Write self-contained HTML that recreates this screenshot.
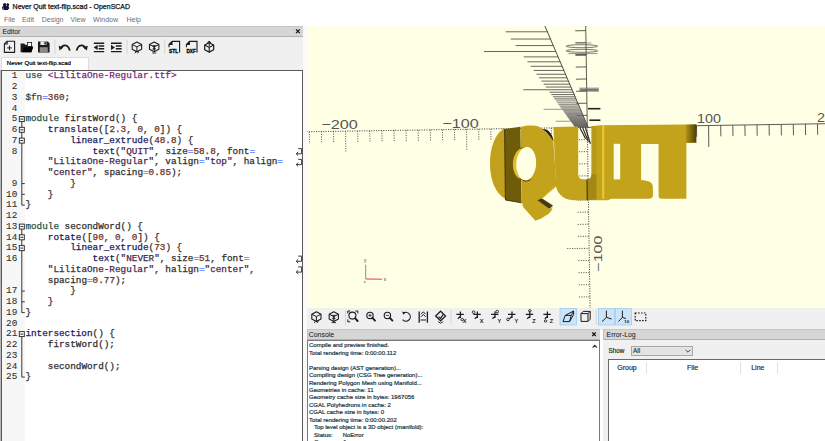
<!DOCTYPE html>
<html lang="en">
<head>
<meta charset="utf-8">
<title>Never Quit text-flip.scad - OpenSCAD</title>
<style>
html,body{margin:0;padding:0;}
body{width:825px;height:441px;overflow:hidden;background:#fff;position:relative;font-family:"Liberation Sans",sans-serif;color:#222;}
.abs{position:absolute;}
.t{position:absolute;white-space:pre;line-height:1;}
#title{left:12.6px;top:2.9px;font-size:7px;color:#111;-webkit-text-stroke:0.25px #111;}
.menu{top:16.1px;font-size:7px;color:#6e6e6e;}
#edhead{left:0;top:26px;width:304.5px;height:11px;background:#d6d6d6;border-top:1px solid #c6c6c6;border-bottom:1px solid #b2b2b2;box-sizing:border-box;}
#edtool{left:0;top:36.2px;width:304.5px;height:34px;background:#f0f0f0;}
#tab{left:1px;top:57px;width:88px;height:13px;background:#fff;border:1px solid #dcdcdc;border-bottom:none;box-sizing:border-box;}
#editor{left:1px;top:69.6px;width:301.8px;height:380px;background:#fff;border:1px solid #5a5a5a;box-sizing:border-box;}
#gutter{left:2px;top:70.6px;width:23px;height:371px;background:#f7f7f7;}
.ln{position:absolute;left:2px;width:15.3px;text-align:right;font:9.333px/10.75px "Liberation Mono",monospace;color:#333;-webkit-text-stroke:0.1px #333;}
.cl{position:absolute;white-space:pre;font:9.333px/10.75px "Liberation Mono",monospace;color:#333;-webkit-text-stroke:0.25px currentColor;}
.k{color:#2c5245;} .i{color:#7a2580;} .v{color:#35483a;} .o{color:#5f7bff;} .n{color:#6a3028;} .f{color:#20205c;} .s{color:#46284e;} .p{color:#2e2e2e;}
#split{left:302.8px;top:26px;width:4px;height:415px;background:#fafafa;}
#view{left:306.6px;top:25.8px;width:518.4px;height:281.8px;background:#ffffe5;overflow:hidden;}
#vtool{left:306.6px;top:307.6px;width:518.4px;height:22px;background:#f0f0f0;}
#conhead{left:306.6px;top:329px;width:293.6px;height:11px;background:#d6d6d6;border-top:1px solid #c6c6c6;border-bottom:1px solid #b2b2b2;border-left:1px solid #c0c0c0;box-sizing:border-box;}
#console{left:306.6px;top:340.4px;width:293.6px;height:110px;background:#fff;border:1px solid #7a7a7a;box-sizing:border-box;}
.con{position:absolute;left:309px;font-size:6px;line-height:7.45px;white-space:pre;color:#173646;-webkit-text-stroke:0.2px #173646;}
#errhead{left:602.6px;top:329px;width:222.4px;height:11px;background:#d6d6d6;border-top:1px solid #c6c6c6;border-bottom:1px solid #b2b2b2;border-left:1px solid #c0c0c0;box-sizing:border-box;}
#errbody{left:602.6px;top:340px;width:222.4px;height:102px;background:#f0f0f0;}
#combo{left:630.5px;top:346.4px;width:62.5px;height:9.6px;background:#e4e4e4;border:1px solid #a8a8a8;box-sizing:border-box;}
#table{left:608.4px;top:359.2px;width:230px;height:100px;background:#fff;border:1px solid #6a6a6a;box-sizing:border-box;}
.th{position:absolute;top:364px;font-size:7px;color:#1c1c34;-webkit-text-stroke:0.15px #1c1c34;transform:translateX(-50%);white-space:pre;line-height:1;}
.sep{position:absolute;top:361.5px;width:1px;height:12px;background:#e2e2e2;}
</style>
</head>
<body>
<!-- title bar -->
<div class="t" id="title">Never Quit text-flip.scad - OpenSCAD</div>
<!-- menu -->
<div class="t menu" style="left:3.9px">File</div>
<div class="t menu" style="left:21.9px">Edit</div>
<div class="t menu" style="left:41.7px">Design</div>
<div class="t menu" style="left:70.4px">View</div>
<div class="t menu" style="left:93.1px">Window</div>
<div class="t menu" style="left:126.5px">Help</div>

<!-- editor dock -->
<div class="abs" id="edtool"></div>
<div class="abs" id="edhead"></div>
<div class="t" style="left:2.4px;top:28.9px;font-size:6.9px;color:#111">Editor</div>
<div class="abs" id="tab"></div>
<div class="t" style="left:6.8px;top:60.2px;font-size:6px;color:#111;text-shadow:0 0 0.4px #111">Never Quit text-flip.scad</div>
<div class="abs" style="left:0;top:70px;width:1px;height:371px;background:#b8b8b8"></div>
<div class="abs" id="editor"></div>
<div class="abs" id="gutter"></div>
<div class="ln" style="top:71.30px">1</div>
<div class="cl" style="top:71.30px;left:25.40px"><span class="k">use </span><span class="i">&lt;LilitaOne-Regular.ttf&gt;</span></div>
<div class="ln" style="top:82.05px">2</div>
<div class="ln" style="top:92.80px">3</div>
<div class="cl" style="top:92.80px;left:25.40px"><span class="v">$fn</span><span class="o">=</span><span class="n">360</span><span class="p">;</span></div>
<div class="ln" style="top:103.55px">4</div>
<div class="ln" style="top:114.30px">5</div>
<div class="cl" style="top:114.30px;left:25.40px"><span class="k">module</span><span class="p"> firstWord() {</span></div>
<div class="ln" style="top:125.05px">6</div>
<div class="cl" style="top:125.05px;left:47.80px"><span class="f">translate</span><span class="p">([</span><span class="n">2.3</span><span class="p">, </span><span class="n">0</span><span class="p">, </span><span class="n">0</span><span class="p">]) {</span></div>
<div class="ln" style="top:135.80px">7</div>
<div class="cl" style="top:135.80px;left:70.20px"><span class="f">linear_extrude</span><span class="p">(</span><span class="n">48.8</span><span class="p">) {</span></div>
<div class="ln" style="top:146.55px">8</div>
<div class="cl" style="top:146.55px;left:92.60px"><span class="f">text</span><span class="p">(</span><span class="s">"QUIT"</span><span class="p">, size</span><span class="o">=</span><span class="n">58.8</span><span class="p">, font</span><span class="o">=</span></div>
<div class="cl" style="top:157.30px;left:47.80px"><span class="s">"LilitaOne-Regular"</span><span class="p">, valign</span><span class="o">=</span><span class="s">"top"</span><span class="p">, halign</span><span class="o">=</span></div>
<div class="cl" style="top:168.05px;left:47.80px"><span class="s">"center"</span><span class="p">, spacing</span><span class="o">=</span><span class="n">0.85</span><span class="p">);</span></div>
<div class="ln" style="top:178.80px">9</div>
<div class="cl" style="top:178.80px;left:70.20px"><span class="p">}</span></div>
<div class="ln" style="top:189.55px">10</div>
<div class="cl" style="top:189.55px;left:47.80px"><span class="p">}</span></div>
<div class="ln" style="top:200.30px">11</div>
<div class="cl" style="top:200.30px;left:25.40px"><span class="p">}</span></div>
<div class="ln" style="top:211.05px">12</div>
<div class="ln" style="top:221.80px">13</div>
<div class="cl" style="top:221.80px;left:25.40px"><span class="k">module</span><span class="p"> secondWord() {</span></div>
<div class="ln" style="top:232.55px">14</div>
<div class="cl" style="top:232.55px;left:47.80px"><span class="f">rotate</span><span class="p">([</span><span class="n">90</span><span class="p">, </span><span class="n">0</span><span class="p">, </span><span class="n">0</span><span class="p">]) {</span></div>
<div class="ln" style="top:243.30px">15</div>
<div class="cl" style="top:243.30px;left:70.20px"><span class="f">linear_extrude</span><span class="p">(</span><span class="n">73</span><span class="p">) {</span></div>
<div class="ln" style="top:254.05px">16</div>
<div class="cl" style="top:254.05px;left:92.60px"><span class="f">text</span><span class="p">(</span><span class="s">"NEVER"</span><span class="p">, size</span><span class="o">=</span><span class="n">51</span><span class="p">, font</span><span class="o">=</span></div>
<div class="cl" style="top:264.80px;left:47.80px"><span class="s">"LilitaOne-Regular"</span><span class="p">, halign</span><span class="o">=</span><span class="s">"center"</span><span class="p">,</span></div>
<div class="cl" style="top:275.55px;left:47.80px"><span class="p">spacing</span><span class="o">=</span><span class="n">0.77</span><span class="p">);</span></div>
<div class="ln" style="top:286.30px">17</div>
<div class="cl" style="top:286.30px;left:70.20px"><span class="p">}</span></div>
<div class="ln" style="top:297.05px">18</div>
<div class="cl" style="top:297.05px;left:47.80px"><span class="p">}</span></div>
<div class="ln" style="top:307.80px">19</div>
<div class="cl" style="top:307.80px;left:25.40px"><span class="p">}</span></div>
<div class="ln" style="top:318.55px">20</div>
<div class="ln" style="top:329.30px">21</div>
<div class="cl" style="top:329.30px;left:25.40px"><span class="f">intersection</span><span class="p">() {</span></div>
<div class="ln" style="top:340.05px">22</div>
<div class="cl" style="top:340.05px;left:47.80px"><span class="p">firstWord();</span></div>
<div class="ln" style="top:350.80px">23</div>
<div class="ln" style="top:361.55px">24</div>
<div class="cl" style="top:361.55px;left:47.80px"><span class="p">secondWord();</span></div>
<div class="ln" style="top:372.30px">25</div>
<div class="cl" style="top:372.30px;left:25.40px"><span class="p">}</span></div>
<div class="abs" id="split"></div>

<!-- 3D view -->
<div class="abs" id="view">
<svg width="518.4" height="281.8" viewBox="306.6 25.8 518.4 281.8" style="position:absolute;left:0;top:0">
<line x1="306.0" y1="131.56" x2="587.2" y2="127.20" stroke="#4a4a4a" stroke-width="1" stroke-dasharray="1.1 1.3"/>
<line x1="587.2" y1="127.20" x2="826.0" y2="123.50" stroke="#4a4a4a" stroke-width="0.9"/>
<line x1="308.9" y1="131.51" x2="309.1" y2="142.51" stroke="#4a4a4a" stroke-width="0.9" stroke-dasharray="1.1 1.3"/>
<line x1="321.0" y1="131.33" x2="321.2" y2="142.33" stroke="#4a4a4a" stroke-width="0.9" stroke-dasharray="1.1 1.3"/>
<line x1="333.1" y1="131.14" x2="333.3" y2="142.14" stroke="#4a4a4a" stroke-width="0.9" stroke-dasharray="1.1 1.3"/>
<line x1="345.2" y1="130.95" x2="345.4" y2="152.45" stroke="#4a4a4a" stroke-width="0.9" stroke-dasharray="1.1 1.3"/>
<line x1="357.3" y1="130.76" x2="357.5" y2="141.76" stroke="#4a4a4a" stroke-width="0.9" stroke-dasharray="1.1 1.3"/>
<line x1="369.4" y1="130.58" x2="369.6" y2="141.58" stroke="#4a4a4a" stroke-width="0.9" stroke-dasharray="1.1 1.3"/>
<line x1="381.5" y1="130.39" x2="381.7" y2="141.39" stroke="#4a4a4a" stroke-width="0.9" stroke-dasharray="1.1 1.3"/>
<line x1="393.6" y1="130.20" x2="393.8" y2="141.20" stroke="#4a4a4a" stroke-width="0.9" stroke-dasharray="1.1 1.3"/>
<line x1="405.7" y1="130.01" x2="405.9" y2="141.01" stroke="#4a4a4a" stroke-width="0.9" stroke-dasharray="1.1 1.3"/>
<line x1="417.8" y1="129.83" x2="418.0" y2="140.83" stroke="#4a4a4a" stroke-width="0.9" stroke-dasharray="1.1 1.3"/>
<line x1="429.9" y1="129.64" x2="430.1" y2="140.64" stroke="#4a4a4a" stroke-width="0.9" stroke-dasharray="1.1 1.3"/>
<line x1="442.0" y1="129.45" x2="442.2" y2="140.45" stroke="#4a4a4a" stroke-width="0.9" stroke-dasharray="1.1 1.3"/>
<line x1="454.1" y1="129.26" x2="454.3" y2="140.26" stroke="#4a4a4a" stroke-width="0.9" stroke-dasharray="1.1 1.3"/>
<line x1="466.2" y1="129.08" x2="466.4" y2="150.58" stroke="#4a4a4a" stroke-width="0.9" stroke-dasharray="1.1 1.3"/>
<line x1="478.3" y1="128.89" x2="478.5" y2="139.89" stroke="#4a4a4a" stroke-width="0.9" stroke-dasharray="1.1 1.3"/>
<line x1="490.4" y1="128.70" x2="490.6" y2="139.70" stroke="#4a4a4a" stroke-width="0.9" stroke-dasharray="1.1 1.3"/>
<line x1="502.5" y1="128.51" x2="502.7" y2="139.51" stroke="#4a4a4a" stroke-width="0.9" stroke-dasharray="1.1 1.3"/>
<line x1="514.6" y1="128.33" x2="514.8" y2="139.33" stroke="#4a4a4a" stroke-width="0.9" stroke-dasharray="1.1 1.3"/>
<line x1="526.7" y1="128.14" x2="526.9" y2="139.14" stroke="#4a4a4a" stroke-width="0.9" stroke-dasharray="1.1 1.3"/>
<line x1="538.8" y1="127.95" x2="539.0" y2="138.95" stroke="#4a4a4a" stroke-width="0.9" stroke-dasharray="1.1 1.3"/>
<line x1="550.9" y1="127.76" x2="551.1" y2="138.76" stroke="#4a4a4a" stroke-width="0.9" stroke-dasharray="1.1 1.3"/>
<line x1="563.0" y1="127.58" x2="563.2" y2="138.58" stroke="#4a4a4a" stroke-width="0.9" stroke-dasharray="1.1 1.3"/>
<line x1="575.1" y1="127.39" x2="575.3" y2="138.39" stroke="#4a4a4a" stroke-width="0.9" stroke-dasharray="1.1 1.3"/>
<line x1="599.3" y1="127.01" x2="599.5" y2="138.01" stroke="#4a4a4a" stroke-width="0.9"/>
<line x1="611.4" y1="126.82" x2="611.6" y2="137.82" stroke="#4a4a4a" stroke-width="0.9"/>
<line x1="623.5" y1="126.64" x2="623.7" y2="137.64" stroke="#4a4a4a" stroke-width="0.9"/>
<line x1="635.6" y1="126.45" x2="635.8" y2="137.45" stroke="#4a4a4a" stroke-width="0.9"/>
<line x1="647.7" y1="126.26" x2="647.9" y2="137.26" stroke="#4a4a4a" stroke-width="0.9"/>
<line x1="659.8" y1="126.07" x2="660.0" y2="137.07" stroke="#4a4a4a" stroke-width="0.9"/>
<line x1="671.9" y1="125.89" x2="672.1" y2="136.89" stroke="#4a4a4a" stroke-width="0.9"/>
<line x1="684.0" y1="125.70" x2="684.2" y2="136.70" stroke="#4a4a4a" stroke-width="0.9"/>
<line x1="696.1" y1="125.51" x2="696.3" y2="136.51" stroke="#4a4a4a" stroke-width="0.9"/>
<line x1="708.2" y1="125.32" x2="708.4" y2="146.82" stroke="#4a4a4a" stroke-width="0.9"/>
<line x1="720.3" y1="125.14" x2="720.5" y2="136.14" stroke="#4a4a4a" stroke-width="0.9"/>
<line x1="732.4" y1="124.95" x2="732.6" y2="135.95" stroke="#4a4a4a" stroke-width="0.9"/>
<line x1="744.5" y1="124.76" x2="744.7" y2="135.76" stroke="#4a4a4a" stroke-width="0.9"/>
<line x1="756.6" y1="124.57" x2="756.8" y2="135.57" stroke="#4a4a4a" stroke-width="0.9"/>
<line x1="768.7" y1="124.39" x2="768.9" y2="135.39" stroke="#4a4a4a" stroke-width="0.9"/>
<line x1="780.8" y1="124.20" x2="781.0" y2="135.20" stroke="#4a4a4a" stroke-width="0.9"/>
<line x1="792.9" y1="124.01" x2="793.1" y2="135.01" stroke="#4a4a4a" stroke-width="0.9"/>
<line x1="805.0" y1="123.82" x2="805.2" y2="134.82" stroke="#4a4a4a" stroke-width="0.9"/>
<line x1="817.1" y1="123.64" x2="817.3" y2="134.64" stroke="#4a4a4a" stroke-width="0.9"/>
<line x1="585.32" y1="25" x2="586.91" y2="127.2" stroke="#4a4a4a" stroke-width="0.9"/>
<line x1="586.91" y1="127.2" x2="589.71" y2="308" stroke="#4a4a4a" stroke-width="1" stroke-dasharray="1.1 1.3"/>
<line x1="576.12" y1="115.3" x2="586.72" y2="115.1" stroke="#4a4a4a" stroke-width="0.9"/>
<line x1="575.93" y1="103.2" x2="586.53" y2="103.0" stroke="#4a4a4a" stroke-width="0.9"/>
<line x1="575.74" y1="91.1" x2="586.34" y2="90.9" stroke="#4a4a4a" stroke-width="0.9"/>
<line x1="575.56" y1="79.0" x2="586.16" y2="78.8" stroke="#4a4a4a" stroke-width="0.9"/>
<line x1="575.37" y1="66.9" x2="585.97" y2="66.7" stroke="#4a4a4a" stroke-width="0.9"/>
<line x1="575.18" y1="54.8" x2="585.78" y2="54.6" stroke="#4a4a4a" stroke-width="0.9"/>
<line x1="574.99" y1="42.6" x2="585.59" y2="42.5" stroke="#4a4a4a" stroke-width="0.9"/>
<line x1="574.81" y1="30.6" x2="585.41" y2="30.4" stroke="#4a4a4a" stroke-width="0.9"/>
<line x1="576.09" y1="139.5" x2="587.09" y2="139.3" stroke="#4a4a4a" stroke-width="0.9" stroke-dasharray="1.1 1.3"/>
<line x1="576.28" y1="151.6" x2="587.28" y2="151.4" stroke="#4a4a4a" stroke-width="0.9" stroke-dasharray="1.1 1.3"/>
<line x1="576.47" y1="163.7" x2="587.47" y2="163.5" stroke="#4a4a4a" stroke-width="0.9" stroke-dasharray="1.1 1.3"/>
<line x1="576.66" y1="175.8" x2="587.66" y2="175.6" stroke="#4a4a4a" stroke-width="0.9" stroke-dasharray="1.1 1.3"/>
<line x1="576.84" y1="187.8" x2="587.84" y2="187.7" stroke="#4a4a4a" stroke-width="0.9" stroke-dasharray="1.1 1.3"/>
<line x1="577.03" y1="200.0" x2="588.03" y2="199.8" stroke="#4a4a4a" stroke-width="0.9" stroke-dasharray="1.1 1.3"/>
<line x1="577.22" y1="212.1" x2="588.22" y2="211.9" stroke="#4a4a4a" stroke-width="0.9" stroke-dasharray="1.1 1.3"/>
<line x1="577.41" y1="224.2" x2="588.41" y2="224.0" stroke="#4a4a4a" stroke-width="0.9" stroke-dasharray="1.1 1.3"/>
<line x1="577.59" y1="236.2" x2="588.59" y2="236.1" stroke="#4a4a4a" stroke-width="0.9" stroke-dasharray="1.1 1.3"/>
<line x1="566.78" y1="248.3" x2="588.78" y2="248.2" stroke="#4a4a4a" stroke-width="0.9" stroke-dasharray="1.1 1.3"/>
<line x1="577.97" y1="260.4" x2="588.97" y2="260.3" stroke="#4a4a4a" stroke-width="0.9" stroke-dasharray="1.1 1.3"/>
<line x1="578.16" y1="272.5" x2="589.16" y2="272.4" stroke="#4a4a4a" stroke-width="0.9" stroke-dasharray="1.1 1.3"/>
<line x1="578.34" y1="284.6" x2="589.34" y2="284.5" stroke="#4a4a4a" stroke-width="0.9" stroke-dasharray="1.1 1.3"/>
<line x1="578.53" y1="296.8" x2="589.53" y2="296.6" stroke="#4a4a4a" stroke-width="0.9" stroke-dasharray="1.1 1.3"/>
<line x1="578.72" y1="308.8" x2="589.72" y2="308.7" stroke="#4a4a4a" stroke-width="0.9" stroke-dasharray="1.1 1.3"/>
<line x1="543.75" y1="24" x2="587.94" y2="127.6" stroke="#3a3a3a" stroke-width="0.9"/>
<line x1="505.16" y1="31.59" x2="546.99" y2="31.59" stroke="#2c2c2c" stroke-width="0.80" opacity="0.90"/>
<line x1="510.45" y1="38.85" x2="550.08" y2="38.85" stroke="#2c2c2c" stroke-width="0.80" opacity="0.90"/>
<line x1="515.21" y1="45.39" x2="552.87" y2="45.39" stroke="#2c2c2c" stroke-width="0.80" opacity="0.90"/>
<line x1="483.65" y1="51.31" x2="555.40" y2="51.31" stroke="#2c2c2c" stroke-width="0.80" opacity="0.90"/>
<line x1="523.44" y1="56.69" x2="557.69" y2="56.69" stroke="#2c2c2c" stroke-width="0.80" opacity="0.90"/>
<line x1="527.02" y1="61.60" x2="559.79" y2="61.60" stroke="#2c2c2c" stroke-width="0.80" opacity="0.90"/>
<line x1="530.31" y1="66.10" x2="561.71" y2="66.10" stroke="#2c2c2c" stroke-width="0.80" opacity="0.90"/>
<line x1="533.33" y1="70.25" x2="563.48" y2="70.25" stroke="#2c2c2c" stroke-width="0.80" opacity="0.90"/>
<line x1="536.11" y1="74.08" x2="565.11" y2="74.08" stroke="#2c2c2c" stroke-width="0.80" opacity="0.90"/>
<line x1="538.70" y1="77.62" x2="566.62" y2="77.62" stroke="#2c2c2c" stroke-width="0.80" opacity="0.90"/>
<line x1="541.10" y1="80.91" x2="568.03" y2="80.91" stroke="#2c2c2c" stroke-width="0.80" opacity="0.90"/>
<line x1="543.33" y1="83.98" x2="569.33" y2="83.98" stroke="#2c2c2c" stroke-width="0.80" opacity="0.90"/>
<line x1="545.41" y1="86.84" x2="570.55" y2="86.84" stroke="#2c2c2c" stroke-width="0.80" opacity="0.90"/>
<line x1="523.03" y1="89.52" x2="571.70" y2="89.52" stroke="#2c2c2c" stroke-width="0.80" opacity="0.90"/>
<line x1="549.19" y1="92.03" x2="572.77" y2="92.03" stroke="#2c2c2c" stroke-width="0.80" opacity="0.90"/>
<line x1="550.91" y1="94.39" x2="573.77" y2="94.39" stroke="#2c2c2c" stroke-width="0.80" opacity="0.90"/>
<line x1="552.53" y1="96.61" x2="574.72" y2="96.61" stroke="#2c2c2c" stroke-width="0.80" opacity="0.90"/>
<line x1="554.05" y1="98.70" x2="575.61" y2="98.70" stroke="#2c2c2c" stroke-width="0.80" opacity="0.90"/>
<line x1="555.49" y1="100.68" x2="576.46" y2="100.68" stroke="#2c2c2c" stroke-width="0.80" opacity="0.60"/>
<line x1="556.86" y1="102.55" x2="577.25" y2="102.55" stroke="#2c2c2c" stroke-width="0.80" opacity="0.60"/>
<line x1="558.15" y1="104.32" x2="578.01" y2="104.32" stroke="#2c2c2c" stroke-width="0.80" opacity="0.60"/>
<line x1="559.37" y1="106.00" x2="578.73" y2="106.00" stroke="#2c2c2c" stroke-width="0.80" opacity="0.60"/>
<line x1="560.54" y1="107.60" x2="579.41" y2="107.60" stroke="#2c2c2c" stroke-width="0.80" opacity="0.60"/>
<line x1="543.23" y1="109.12" x2="580.06" y2="109.12" stroke="#2c2c2c" stroke-width="0.80" opacity="0.60"/>
<line x1="562.70" y1="110.56" x2="580.68" y2="110.56" stroke="#2c2c2c" stroke-width="0.80" opacity="0.60"/>
<line x1="563.71" y1="111.94" x2="581.26" y2="111.94" stroke="#2c2c2c" stroke-width="0.80" opacity="0.60"/>
<line x1="564.66" y1="113.26" x2="581.83" y2="113.26" stroke="#2c2c2c" stroke-width="0.80" opacity="0.60"/>
<line x1="565.58" y1="114.52" x2="582.36" y2="114.52" stroke="#2c2c2c" stroke-width="0.80" opacity="0.60"/>
<line x1="566.46" y1="115.73" x2="582.88" y2="115.73" stroke="#2c2c2c" stroke-width="0.80" opacity="0.60"/>
<line x1="567.30" y1="116.88" x2="583.37" y2="116.88" stroke="#2c2c2c" stroke-width="0.80" opacity="0.60"/>
<line x1="568.11" y1="117.98" x2="583.84" y2="117.98" stroke="#2c2c2c" stroke-width="0.80" opacity="0.60"/>
<line x1="568.88" y1="119.04" x2="584.29" y2="119.04" stroke="#2c2c2c" stroke-width="0.80" opacity="0.60"/>
<line x1="569.62" y1="120.06" x2="584.73" y2="120.06" stroke="#2c2c2c" stroke-width="0.80" opacity="0.60"/>
<line x1="555.52" y1="121.04" x2="585.14" y2="121.04" stroke="#2c2c2c" stroke-width="0.80" opacity="0.60"/>
<line x1="571.02" y1="121.98" x2="585.55" y2="121.98" stroke="#2c2c2c" stroke-width="0.80" opacity="0.60"/>
<line x1="571.68" y1="122.89" x2="585.93" y2="122.89" stroke="#2c2c2c" stroke-width="0.80" opacity="0.60"/>
<line x1="572.31" y1="123.76" x2="586.30" y2="123.76" stroke="#2c2c2c" stroke-width="0.80" opacity="0.60"/>
<line x1="572.92" y1="124.60" x2="586.66" y2="124.60" stroke="#2c2c2c" stroke-width="0.80" opacity="0.60"/>
<line x1="573.51" y1="125.41" x2="587.01" y2="125.41" stroke="#2c2c2c" stroke-width="0.80" opacity="0.60"/>
<line x1="574.08" y1="126.19" x2="587.34" y2="126.19" stroke="#2c2c2c" stroke-width="0.80" opacity="0.60"/>
<line x1="574.63" y1="126.94" x2="587.66" y2="126.94" stroke="#2c2c2c" stroke-width="0.80" opacity="0.60"/>
<defs><linearGradient id="bg" x1="0" x2="0" y1="0" y2="1"><stop offset="0" stop-color="#8a8a8a" stop-opacity="0"/><stop offset="0.5" stop-color="#808080" stop-opacity="0.55"/><stop offset="1" stop-color="#5c5c5c" stop-opacity="0.9"/></linearGradient></defs>
<path d="M552.1 96 L574.5 96 L587.9 127.4 L575.0 127.4Z" fill="url(#bg)"/>
<ellipse cx="581.5" cy="46" rx="15.8" ry="1.5" fill="none" stroke="#555" stroke-width="0.8"/>
<ellipse cx="581.5" cy="50.6" rx="15.8" ry="1.5" fill="none" stroke="#555" stroke-width="0.8"/>
<line x1="575" y1="42.8" x2="591" y2="42.8" stroke="#777" stroke-width="0.7"/>
<line x1="568" y1="53.4" x2="597" y2="53.4" stroke="#777" stroke-width="0.8"/>
<line x1="575" y1="54.7" x2="586" y2="54.7" stroke="#222" stroke-width="0.9"/>
<rect x="579" y="87.4" width="19.5" height="4.2" fill="#777" opacity="0.7"/>
<line x1="580" y1="89.8" x2="598" y2="89.8" stroke="#444" stroke-width="1" opacity="0.8"/>
<line x1="587.6" y1="108.5" x2="600" y2="108.5" stroke="#222" stroke-width="1.6"/>
<line x1="589" y1="120" x2="600" y2="120" stroke="#222" stroke-width="1.6"/>
<text x="321" y="129.2" font-size="12.8" textLength="36.5" lengthAdjust="spacingAndGlyphs" font-family="Liberation Sans, sans-serif" fill="#555">−200</text>
<text x="442" y="127.4" font-size="12.8" textLength="36.5" lengthAdjust="spacingAndGlyphs" font-family="Liberation Sans, sans-serif" fill="#555">−100</text>
<text x="696.7" y="123.2" font-size="12.6" textLength="24" lengthAdjust="spacingAndGlyphs" font-family="Liberation Sans, sans-serif" fill="#555">100</text>
<text x="816.6" y="121.8" font-size="12.6" textLength="24" lengthAdjust="spacingAndGlyphs" font-family="Liberation Sans, sans-serif" fill="#555">200</text>
<text transform="translate(601.2 271.5) rotate(-90)" font-size="11.4" textLength="36" lengthAdjust="spacingAndGlyphs" font-family="Liberation Sans, sans-serif" fill="#555">−100</text>
<path d="M505 128.3 C496.5 130.5 489.6 145 489.6 163 C489.6 181 496 194.5 505.4 198.6 L505.4 128.3Z" fill="#c1a01d"/>
<path d="M504.2 128.8 L520 126.6 L521.2 202.6 L505 199.8Z" fill="#6f5c0a"/>
<path d="M504.2 128.8 L505 199.8" stroke="#3b3004" stroke-width="0.9" fill="none"/>
<path d="M505 199.8 L521.2 202.6" stroke="#3b3004" stroke-width="0.9" fill="none"/>
<path d="M520.2 126.8 C524 125.2 530 124.8 535 125.6 C537 126 538.5 126.4 539.5 127 Q547.8 132.4 553 141 L556 186.2 L542.2 197.7 L536.8 200 L549 208.8 L552.2 207.2 C551.5 211 548.5 213.6 545.4 215.4 C542 217.8 538.5 219.6 535 220.6 L522.7 206.8 L521.3 201.3Z" fill="#c4a31c"/>
<path d="M536.8 200 L541.3 198 L552.6 205.4 L549 208.8Z" fill="#4a3c08"/>
<path d="M555.3 186 L542.2 197.7" stroke="#e6c63a" stroke-width="1" fill="none"/>
<path d="M549 208.8 L552.4 207" stroke="#e6c63a" stroke-width="1" fill="none"/>
<path d="M553 126.8 L577.8 126.2 L577.8 174 Q577.8 179 582.6 179 L586.4 179 Q591.2 179 591.2 174 L591.2 126 L600 125 L686 124.3 L686 198.6 L661.4 198.6 Q658.2 198.6 658.2 195.6 L658.2 143.7 L640.7 143.7 L640.7 179.8 C646 180.4 652.2 180.8 652.4 186.4 L652.6 194.6 Q652.6 198.6 648.6 198.6 L612 198.6 Q610 198.6 608 200 L573 200 C563 199.5 557.5 194 555.5 186 Z" fill="#c4a31c"/>
<path d="M542 128.8 Q548.4 133.4 553.2 141.4 C553 137.6 551.4 134 548.6 131.2 C546.6 129.4 544.4 128.6 542 128.8Z" fill="#241d02"/>
<path d="M591.2 126 L596 125.6 L596 199 L591.2 199.6Z" fill="#b7991a"/>
<path d="M586.4 179.2 Q591.2 179 591.2 174 L596 174 L596 199 L586.4 200Z" fill="#a38815"/>
<path d="M586.6 179.4 L586.9 200" stroke="#3b3004" stroke-width="1" fill="none"/>
<path d="M601.6 125 L604 124.9 L604 198.6 L601.6 198.6Z" fill="#e6c62e"/>
<rect x="613.3" y="143.6" width="6.5" height="35.6" fill="#ffffe5"/>
<defs><linearGradient id="tg" x1="0" x2="1" y1="0" y2="0"><stop offset="0" stop-color="#b39418"/><stop offset="0.55" stop-color="#7a650c"/><stop offset="1" stop-color="#4d3f06"/></linearGradient></defs>
<path d="M685.4 124.3 L696 124 L696 142.6 L685.4 142.8Z" fill="url(#tg)"/>
<ellipse cx="522" cy="163.4" rx="10.1" ry="15.9" fill="#dfbd2a" stroke="#4e4006" stroke-width="0.7" transform="rotate(3 522 163.4)"/>
<path d="M519 177 C522 182 528 183 532.4 177.6 C528 181.6 523 181 519 177Z" fill="#3b3004"/>
<ellipse cx="525.8" cy="163.5" rx="9.9" ry="16.7" fill="#ffffe5" transform="rotate(4 525.8 163.5)"/>
<line x1="579.4" y1="127.2" x2="585.2" y2="138.6" stroke="#2a2a2a" stroke-width="1.2"/>
<line x1="582.2" y1="127.2" x2="588.0" y2="141.6" stroke="#2a2a2a" stroke-width="1.2"/>
<line x1="585.0" y1="127.2" x2="590.0" y2="143.6" stroke="#2a2a2a" stroke-width="1.2"/>
<line x1="365.3" y1="278.8" x2="365.3" y2="264.5" stroke="#3fbf5f" stroke-width="1"/>
<line x1="365.3" y1="278.8" x2="381.6" y2="279" stroke="#e04040" stroke-width="1"/>
<text x="363.6" y="261.6" font-size="4.6" font-family="Liberation Sans, sans-serif" fill="#333">y</text>
<text x="383.4" y="280.4" font-size="4.6" font-family="Liberation Sans, sans-serif" fill="#333">x</text>
<text x="363.4" y="282.6" font-size="4" font-family="Liberation Sans, sans-serif" fill="#333">z</text>
</svg>
</div>
<div class="abs" id="vtool"></div>

<!-- console -->
<div class="abs" id="conhead"></div>
<div class="t" style="left:308.8px;top:332px;font-size:6.9px;color:#111">Console</div>
<div class="abs" id="console"></div>
<div class="con" style="top:342.3px">Compile and preview finished.
Total rendering time: 0:00:00.112

Parsing design (AST generation)...
Compiling design (CSG Tree generation)...
Rendering Polygon Mesh using Manifold...
Geometries in cache: 11
Geometry cache size in bytes: 1967056
CGAL Polyhedrons in cache: 2
CGAL cache size in bytes: 0
Total rendering time: 0:00:00.202
   Top level object is a 3D object (manifold):
   Status:      NoError
   Genus:      1</div>

<!-- error log -->
<div class="abs" id="errbody"></div>
<div class="abs" id="errhead"></div>
<div class="t" style="left:606.6px;top:332px;font-size:6.9px;color:#111">Error-Log</div>
<div class="t" style="left:608.5px;top:348px;font-size:6.4px;color:#1a1a1a;-webkit-text-stroke:0.15px #1a1a1a">Show</div>
<div class="abs" id="combo"></div>
<div class="t" style="left:633px;top:348px;font-size:6.4px;color:#173646;-webkit-text-stroke:0.15px #173646">All</div>
<div class="abs" id="table"></div>
<div class="th" style="left:627px">Group</div>
<div class="th" style="left:692.6px">File</div>
<div class="th" style="left:757.8px">Line</div>
<div class="sep" style="left:645.5px"></div>
<div class="sep" style="left:739.6px"></div>
<div class="sep" style="left:776.6px"></div>

<!-- overlay svg for icons, fold markers etc -->
<svg class="abs" style="left:0;top:0" width="825" height="441" viewBox="0 0 825 441">
<line x1="21.8" y1="119.1" x2="21.8" y2="205.1" stroke="#222" stroke-width="0.9"/>
<rect x="19.3" y="116.6" width="5" height="5" fill="#fdfdfd" stroke="#222" stroke-width="0.9"/>
<line x1="20.4" y1="119.1" x2="23.2" y2="119.1" stroke="#111" stroke-width="0.9"/>
<rect x="19.3" y="127.3" width="5" height="5" fill="#fdfdfd" stroke="#222" stroke-width="0.9"/>
<line x1="20.4" y1="129.8" x2="23.2" y2="129.8" stroke="#111" stroke-width="0.9"/>
<rect x="19.3" y="138.1" width="5" height="5" fill="#fdfdfd" stroke="#222" stroke-width="0.9"/>
<line x1="20.4" y1="140.6" x2="23.2" y2="140.6" stroke="#111" stroke-width="0.9"/>
<line x1="21.8" y1="183.6" x2="24.8" y2="183.6" stroke="#222" stroke-width="0.9"/>
<line x1="21.8" y1="194.3" x2="24.8" y2="194.3" stroke="#222" stroke-width="0.9"/>
<line x1="21.8" y1="205.1" x2="24.8" y2="205.1" stroke="#222" stroke-width="0.9"/>
<line x1="21.8" y1="226.6" x2="21.8" y2="312.6" stroke="#222" stroke-width="0.9"/>
<rect x="19.3" y="224.1" width="5" height="5" fill="#fdfdfd" stroke="#222" stroke-width="0.9"/>
<line x1="20.4" y1="226.6" x2="23.2" y2="226.6" stroke="#111" stroke-width="0.9"/>
<rect x="19.3" y="234.8" width="5" height="5" fill="#fdfdfd" stroke="#222" stroke-width="0.9"/>
<line x1="20.4" y1="237.3" x2="23.2" y2="237.3" stroke="#111" stroke-width="0.9"/>
<rect x="19.3" y="245.6" width="5" height="5" fill="#fdfdfd" stroke="#222" stroke-width="0.9"/>
<line x1="20.4" y1="248.1" x2="23.2" y2="248.1" stroke="#111" stroke-width="0.9"/>
<line x1="21.8" y1="291.1" x2="24.8" y2="291.1" stroke="#222" stroke-width="0.9"/>
<line x1="21.8" y1="301.8" x2="24.8" y2="301.8" stroke="#222" stroke-width="0.9"/>
<line x1="21.8" y1="312.6" x2="24.8" y2="312.6" stroke="#222" stroke-width="0.9"/>
<line x1="21.8" y1="334.1" x2="21.8" y2="377.1" stroke="#222" stroke-width="0.9"/>
<rect x="19.3" y="331.6" width="5" height="5" fill="#fdfdfd" stroke="#222" stroke-width="0.9"/>
<line x1="20.4" y1="334.1" x2="23.2" y2="334.1" stroke="#111" stroke-width="0.9"/>
<line x1="21.8" y1="377.1" x2="24.8" y2="377.1" stroke="#222" stroke-width="0.9"/>
<path d="M298.2 148.6 h3.4 v5.2 h-5.4 m2 -1.9 l-2 1.9 l2 1.9" fill="none" stroke="#3a3a3a" stroke-width="1"/>
<path d="M298.2 159.4 h3.4 v5.2 h-5.4 m2 -1.9 l-2 1.9 l2 1.9" fill="none" stroke="#3a3a3a" stroke-width="1"/>
<path d="M298.2 256.1 h3.4 v5.2 h-5.4 m2 -1.9 l-2 1.9 l2 1.9" fill="none" stroke="#3a3a3a" stroke-width="1"/>
<path d="M298.2 266.9 h3.4 v5.2 h-5.4 m2 -1.9 l-2 1.9 l2 1.9" fill="none" stroke="#3a3a3a" stroke-width="1"/>
<g fill="none" stroke="#1c1c1c" stroke-width="1.1" stroke-linejoin="round">
<path d="M7.2 41.2 H14.6 V52.4 H4.4 V44 Z"/>
<path d="M7.2 41.2 V44 H4.4"/>
<path d="M9.5 45.6 V50.2 M7.2 47.9 H11.8" stroke-width="1"/>
</g>
<path d="M20.6 52.2 V43.6 H24.2 L25.2 44.8 H27 V42 H32 V46.2 H33 L31.4 52.2 Z" fill="#1c1c1c"/>
<path d="M27.8 42.8 H31.2 V46 H27.8Z" fill="#f4f4f4"/>
<path d="M22.2 52.2 L23.8 47.2 H33.2 L31.4 52.2Z" fill="#000"/>
<path d="M38 41.4 H47.8 L49.6 43.2 V52.4 H38Z" fill="#1c1c1c"/>
<rect x="40.4" y="41.4" width="6" height="3.6" fill="#e8e8e8"/>
<rect x="44.4" y="41.8" width="1.4" height="2.8" fill="#1c1c1c"/>
<rect x="39.8" y="47.2" width="8" height="5.2" fill="#8a8a8a"/>
<rect x="54.5" y="39.6" width="0.8" height="14.6" fill="#cfcfcf"/>
<rect x="126.6" y="39.6" width="0.8" height="14.6" fill="#cfcfcf"/>
<rect x="164.4" y="39.6" width="0.8" height="14.6" fill="#cfcfcf"/>
<path d="M60.8 48.8 C62.4 44 68.2 43.8 69.8 50.6" fill="none" stroke="#1c1c1c" stroke-width="1.7"/>
<path d="M58.6 45.8 L63.4 47.2 L59.6 50.6Z" fill="#1c1c1c"/>
<path d="M85.6 48.8 C84 44 78.2 43.8 76.6 50.6" fill="none" stroke="#1c1c1c" stroke-width="1.7"/>
<path d="M87.8 45.8 L83 47.2 L86.8 50.6Z" fill="#1c1c1c"/>
<g stroke="#1c1c1c" stroke-width="1.4" fill="none">
<path d="M93.8 43.2 H104.2 M98.6 46 H104.2 M98.6 48.8 H104.2 M93.8 51.6 H104.2"/>
<path d="M111 43.2 H121.6 M115.8 46 H121.6 M115.8 48.8 H121.6 M111 51.6 H121.6"/>
</g>
<path d="M93.6 47.4 L97.6 44.8 V50Z" fill="#1c1c1c"/>
<path d="M115 47.4 L111 44.8 V50Z" fill="#1c1c1c"/>
<path d="M136.9 42.0 L141.6 44.5 L141.6 49.3 L136.9 51.8 L132.2 49.3 L132.2 44.5Z" fill="none" stroke="#1c1c1c" stroke-width="1.1" stroke-linejoin="round"/>
<path d="M132.2 44.5 L136.9 46.9 L141.6 44.5 M136.9 46.9 V51.8" fill="none" stroke="#1c1c1c" stroke-width="1.0"/>
<path d="M134.6 50.8 l1.6 1.2 l-1.6 1.2 M137.2 50.8 l1.6 1.2 l-1.6 1.2" fill="none" stroke="#1c1c1c" stroke-width="0.8"/>
<path d="M154.2 42.0 L158.9 44.5 L158.9 49.3 L154.2 51.8 L149.5 49.3 L149.5 44.5Z" fill="none" stroke="#1c1c1c" stroke-width="1.1" stroke-linejoin="round"/>
<path d="M149.5 44.5 L154.2 46.9 L158.9 44.5 M154.2 46.9 V51.8" fill="none" stroke="#1c1c1c" stroke-width="1.0"/>
<path d="M152.6 45.6 h3.2 l-3.2 3.6 h3.2 l-3.2 -3.6" fill="#1c1c1c" stroke="#1c1c1c" stroke-width="0.5"/>
<path d="M152.2 53 h4" stroke="#1c1c1c" stroke-width="0.9"/>
<path d="M172.0 41.4 H179.6 V52.6 M172.0 41.4 L169.0 44.4 V47.2 M172.0 41.4 V44.4 H169.0" fill="none" stroke="#1c1c1c" stroke-width="1.1"/>
<path d="M172.0 41.4 L169.0 44.4 H172.0Z" fill="#1c1c1c"/>
<text x="169.1" y="52.6" font-family="Liberation Sans, sans-serif" font-weight="bold" font-size="5.6" textLength="9.2" lengthAdjust="spacingAndGlyphs" fill="#000" stroke="#000" stroke-width="0.3">STL</text>
<path d="M189.4 41.4 H197.0 V52.6 M189.4 41.4 L186.4 44.4 V47.2 M189.4 41.4 V44.4 H186.4" fill="none" stroke="#1c1c1c" stroke-width="1.1"/>
<path d="M189.4 41.4 L186.4 44.4 H189.4Z" fill="#1c1c1c"/>
<text x="186.5" y="52.6" font-family="Liberation Sans, sans-serif" font-weight="bold" font-size="5.6" textLength="9.2" lengthAdjust="spacingAndGlyphs" fill="#000" stroke="#000" stroke-width="0.3">DXF</text>
<path d="M209.2 42.7 L213.7 45.0 L213.7 49.8 L209.2 52.1 L204.7 49.8 L204.7 45.0Z" fill="none" stroke="#1c1c1c" stroke-width="1.2" stroke-linejoin="round"/>
<path d="M204.7 45.0 L209.2 47.4 L213.7 45.0 M209.2 47.4 V52.1" fill="none" stroke="#1c1c1c" stroke-width="1.1"/>
<path d="M209.2 46.6 V41.4 M207.4 43 L209.2 41 L211 43" fill="none" stroke="#1c1c1c" stroke-width="1"/>
<path d="M3 3.9 L5 2.8 L6.2 4.2 L7.8 3.1 L9.3 4.4 L8.5 6.2 L9.3 8.2 L7.6 9.9 L5 10.1 L2.5 9.5 L1.9 7.2 L3.3 6 Z" fill="#10102e"/>
<circle cx="6.4" cy="5.3" r="0.7" fill="#cfd6ee"/>
<circle cx="3.4" cy="8.1" r="0.6" fill="#b9b2a0"/>
<circle cx="6.7" cy="8.2" r="0.8" fill="#2a2f8a"/>
<path d="M296 29.4 l3.8 3.8 m0 -3.8 l-3.8 3.8" stroke="#111" stroke-width="1.2" fill="none"/>
<path d="M592.2 332.4 l3.6 3.6 m0 -3.6 l-3.6 3.6" stroke="#111" stroke-width="1.2" fill="none"/>
<path d="M592.6 347.6 l2.2 -2.2 l2.2 2.2" stroke="#333" stroke-width="1.1" fill="none"/>
<path d="M685.6 349.8 l2.4 2.4 l2.4 -2.4" stroke="#333" stroke-width="0.9" fill="none"/>
<rect x="560.0" y="308.4" width="16.6" height="16.6" fill="#cce4f7" stroke="#9cc8ea" stroke-width="0.7"/>
<rect x="598.4" y="308.4" width="16.0" height="16.6" fill="#cce4f7" stroke="#9cc8ea" stroke-width="0.7"/>
<rect x="615.4" y="308.4" width="16.0" height="16.6" fill="#cce4f7" stroke="#9cc8ea" stroke-width="0.7"/>
<rect x="345.0" y="310" width="0.8" height="14.6" fill="#cfcfcf"/>
<rect x="450.6" y="310" width="0.8" height="14.6" fill="#cfcfcf"/>
<rect x="595.8" y="310" width="0.8" height="14.6" fill="#cfcfcf"/>
<path d="M316.4 311.8 L321.0 314.2 L321.0 319.0 L316.4 321.4 L311.8 319.0 L311.8 314.2Z" fill="none" stroke="#1c1c1c" stroke-width="1.1" stroke-linejoin="round"/>
<path d="M311.8 314.2 L316.4 316.6 L321.0 314.2 M316.4 316.6 V321.4" fill="none" stroke="#1c1c1c" stroke-width="1.0"/>
<path d="M314 320.4 l1.6 1.3 l-1.6 1.3 M316.8 320.4 l1.6 1.3 l-1.6 1.3" fill="none" stroke="#1c1c1c" stroke-width="0.8"/>
<path d="M333.8 311.8 L338.4 314.2 L338.4 319.0 L333.8 321.4 L329.2 319.0 L329.2 314.2Z" fill="none" stroke="#1c1c1c" stroke-width="1.1" stroke-linejoin="round"/>
<path d="M329.2 314.2 L333.8 316.6 L338.4 314.2 M333.8 316.6 V321.4" fill="none" stroke="#1c1c1c" stroke-width="1.0"/>
<path d="M332.2 315.2 h3.2 l-3.2 3.6 h3.2 l-3.2 -3.6" fill="#1c1c1c" stroke="#1c1c1c" stroke-width="0.5"/>
<path d="M331.6 322.6 h4.4" stroke="#1c1c1c" stroke-width="0.9"/>
<circle cx="352.4" cy="315.6" r="3.5" fill="none" stroke="#1c1c1c" stroke-width="1.1"/>
<path d="M355.0 318.2 L357.6 321.0" stroke="#1c1c1c" stroke-width="1.9" stroke-linecap="round"/>
<path d="M347.8 313.4 V311 H350.2 M355.4 311 H357.8 V313.4 M347.8 319.4 V321.8 H350.2" fill="none" stroke="#1c1c1c" stroke-width="1"/>
<circle cx="370.0" cy="315.4" r="3.2" fill="none" stroke="#1c1c1c" stroke-width="1.1"/>
<path d="M372.4 317.8 L375.0 320.6" stroke="#1c1c1c" stroke-width="1.9" stroke-linecap="round"/>
<path d="M368.4 315.4 h3.2 M370 313.8 v3.2" stroke="#1c1c1c" stroke-width="0.8"/>
<circle cx="387.4" cy="315.4" r="3.2" fill="none" stroke="#1c1c1c" stroke-width="1.1"/>
<path d="M389.8 317.8 L392.4 320.6" stroke="#1c1c1c" stroke-width="1.9" stroke-linecap="round"/>
<path d="M385.8 315.4 h3.2" stroke="#1c1c1c" stroke-width="0.8"/>
<path d="M403.6 313 A4.4 4.4 0 1 1 402.6 319.6" fill="none" stroke="#1c1c1c" stroke-width="1.1"/>
<path d="M402.2 311.4 L405.6 312.4 L403.2 314.8Z" fill="#1c1c1c"/>
<path d="M419.2 311.6 V322.8 M427.4 311.6 V322.8" stroke="#1c1c1c" stroke-width="1.3"/>
<path d="M420.6 320 H426 M421 314.2 L423.3 311.8 L425.6 314.2 M421 316.8 L423.3 314.4 L425.6 316.8" fill="none" stroke="#1c1c1c" stroke-width="1"/>
<path d="M440.6 311.2 L445.6 316 L440.6 320.8 L435.6 316Z" fill="none" stroke="#1c1c1c" stroke-width="1.2"/>
<path d="M438.4 316.6 L440.6 318.4 L443.2 314.4" fill="none" stroke="#1c1c1c" stroke-width="1.2"/>
<path d="M438 321.6 L440.6 323.2 L443.2 321.6" fill="none" stroke="#1c1c1c" stroke-width="0.9"/>
<path d="M460.4 311.4 v6.6 M456.4 314.4 h7.4 M460.4 316.4 l-2.6 2.4" fill="none" stroke="#1c1c1c" stroke-width="1.25"/>
<circle cx="462.2" cy="319.6" r="1.2" fill="none" stroke="#1c1c1c" stroke-width="0.9"/>
<text x="462.8" y="323.2" font-family="Liberation Sans, sans-serif" font-weight="bold" font-size="5.6" fill="#1c1c1c">X</text>
<path d="M477.4 311.4 v6.6 M473.4 314.4 h7.4 M477.4 316.4 l-2.6 2.4" fill="none" stroke="#1c1c1c" stroke-width="1.25"/>
<circle cx="473.6" cy="312.2" r="1.3" fill="none" stroke="#1c1c1c" stroke-width="0.9"/>
<text x="479.8" y="323.2" font-family="Liberation Sans, sans-serif" font-weight="bold" font-size="5.6" fill="#1c1c1c">X</text>
<path d="M495.0 311.4 v6.6 M491.0 314.4 h7.4 M495.0 316.4 l-2.6 2.4" fill="none" stroke="#1c1c1c" stroke-width="1.25"/>
<circle cx="497.2" cy="311.6" r="1.3" fill="none" stroke="#1c1c1c" stroke-width="0.9"/>
<text x="497.4" y="323.2" font-family="Liberation Sans, sans-serif" font-weight="bold" font-size="5.6" fill="#1c1c1c">Y</text>
<path d="M512.0 311.4 v6.6 M508.0 314.4 h7.4 M512.0 316.4 l-2.6 2.4" fill="none" stroke="#1c1c1c" stroke-width="1.25"/>
<circle cx="508.0" cy="319.4" r="1.3" fill="none" stroke="#1c1c1c" stroke-width="0.9"/>
<text x="514.4" y="323.2" font-family="Liberation Sans, sans-serif" font-weight="bold" font-size="5.6" fill="#1c1c1c">Y</text>
<path d="M529.8 311.4 v6.6 M525.8 314.4 h7.4 M529.8 316.4 l-2.6 2.4" fill="none" stroke="#1c1c1c" stroke-width="1.25"/>
<circle cx="529.8" cy="310.8" r="1.2" fill="none" stroke="#1c1c1c" stroke-width="0.9"/>
<text x="532.2" y="323.2" font-family="Liberation Sans, sans-serif" font-weight="bold" font-size="5.6" fill="#1c1c1c">Z</text>
<path d="M547.4 311.4 v6.6 M543.4 314.4 h7.4 M547.4 316.4 l-2.6 2.4" fill="none" stroke="#1c1c1c" stroke-width="1.25"/>
<circle cx="545.6" cy="321" r="1.2" fill="none" stroke="#1c1c1c" stroke-width="0.9"/>
<text x="549.8" y="323.2" font-family="Liberation Sans, sans-serif" font-weight="bold" font-size="5.6" fill="#1c1c1c">Z</text>
<path d="M563 321.6 L565.2 315.4 L573.6 311 L573.6 314.6 L569.6 321.6 Z M565.2 315.4 L571.2 315.4 L569.6 321.6 M571.2 315.4 L573.6 311" fill="none" stroke="#1c1c1c" stroke-width="1" stroke-linejoin="round"/>
<path d="M581 313.6 H588 V321.4 H581Z M583.2 311.4 H590.2 V319.2 M581 313.6 L583.2 311.4 M588 313.6 L590.2 311.4 M588 321.4 L590.2 319.2" fill="none" stroke="#1c1c1c" stroke-width="1" stroke-linejoin="round"/>
<path d="M606.4 310.6 V317.4 L602 321.6 M606.4 317.4 L611.6 319" fill="none" stroke="#1c1c1c" stroke-width="1"/>
<path d="M622.4 310.6 V317.4 L618.4 321.6 M622.4 317.4 L626 318.6" fill="none" stroke="#1c1c1c" stroke-width="1"/>
<text x="624.2" y="323.4" font-family="Liberation Sans, sans-serif" font-weight="bold" font-size="4.4" fill="#1c1c1c">10</text>
<rect x="635.2" y="313" width="10.6" height="7.6" fill="none" stroke="#1c1c1c" stroke-width="1.2" stroke-dasharray="1.6 1.3"/>
</svg>
</body>
</html>
